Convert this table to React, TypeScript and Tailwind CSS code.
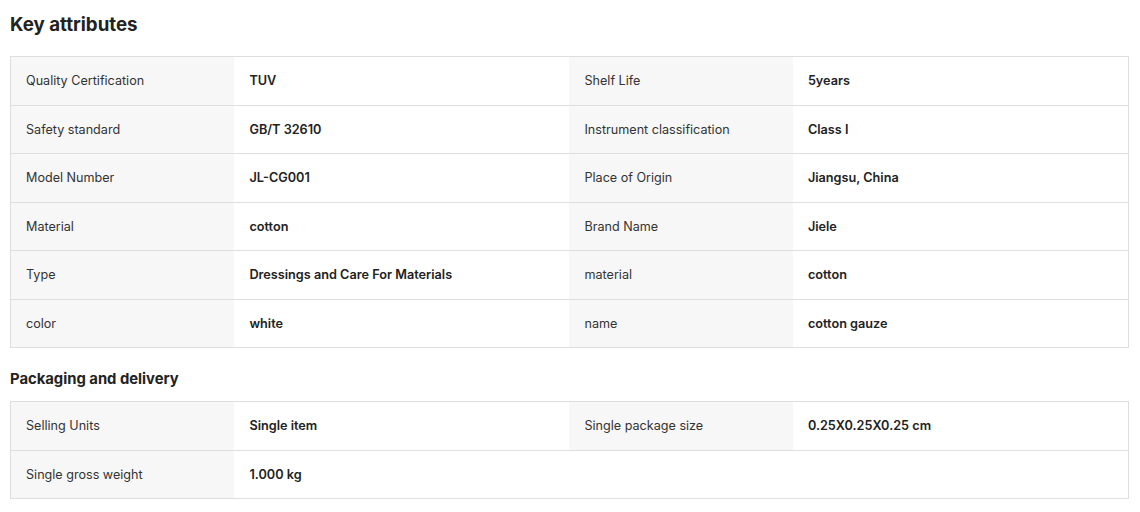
import React from "react";

const rows1: [string, string, string, string][] = [
  ["Quality Certification", "TUV", "Shelf Life", "5years"],
  ["Safety standard", "GB/T 32610", "Instrument classification", "Class I"],
  ["Model Number", "JL-CG001", "Place of Origin", "Jiangsu, China"],
  ["Material", "cotton", "Brand Name", "Jiele"],
  ["Type", "Dressings and Care For Materials", "material", "cotton"],
  ["color", "white", "name", "cotton gauze"],
];

const rows2: [string, string, string?, string?][] = [
  ["Selling Units", "Single item", "Single package size", "0.25X0.25X0.25 cm"],
  ["Single gross weight", "1.000 kg"],
];

function Table({ rows }: { rows: [string, string, string?, string?][] }) {
  return (
    <div className="ml-[10px] w-[1119px] border border-[#dedede]">
      {rows.map((r, i) => (
        <div
          key={i}
          className={`grid grid-cols-[20%_30%_20%_30%] ${i > 0 ? "h-[48.5px] border-t border-[#dedede]" : "h-[47.5px]"}`}
        >
          <div className="bg-[#f7f7f7] flex items-center pl-[15px] pt-[2px] text-[12.6px] text-[#333]">{r[0]}</div>
          <div className="flex items-center pl-[15px] text-[12.7px] font-semibold text-[#222]">{r[1]}</div>
          {r[2] ? (
            <div className="bg-[#f7f7f7] flex items-center pl-[15px] pt-[2px] text-[12.6px] text-[#333]">{r[2]}</div>
          ) : (
            <div />
          )}
          <div className="flex items-center pl-[15px] text-[12.7px] font-semibold text-[#222]">{r[3] ?? ""}</div>
        </div>
      ))}
    </div>
  );
}

export default function App() {
  return (
    <div className="w-[1140px] h-[512px] bg-white" style={{ fontFamily: "Inter, 'Noto Sans', sans-serif" }}>
      <div className="pt-[13px] pl-[10px] h-[56px]">
        <h2 className="text-[18.7px] font-bold text-[#222] leading-[24px]">Key attributes</h2>
      </div>
      <Table rows={rows1} />
      <div className="h-[53px] pl-[10px] pt-[21px]">
        <h3 className="text-[14.8px] font-bold text-[#222] leading-[20px]">Packaging and delivery</h3>
      </div>
      <Table rows={rows2} />
    </div>
  );
}
